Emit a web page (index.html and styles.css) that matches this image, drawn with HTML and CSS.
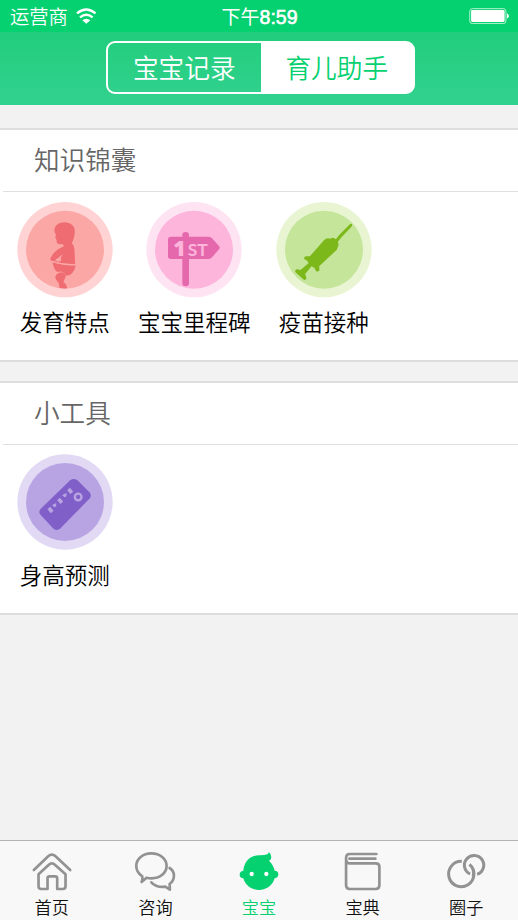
FILE: index.html
```html
<!DOCTYPE html>
<html lang="zh-CN">
<head>
<meta charset="utf-8">
<title>育儿助手</title>
<link rel="stylesheet" href="styles.css">
</head>
<body>
<div class="app">
  <div class="status">
    <div class="carrier"><span>运营商</span>
      <svg class="wifi" viewBox="228 24 62 48"><g fill="none" stroke="#fff" stroke-width="7"><path d="M231 40Q259 17 287 40"/><path d="M240 52Q259 36 278 52"/></g><path d="M247 61Q259 51 271 61L259 71Z" fill="#fff"/></svg>
    </div>
    <div class="time">下午<span class="digits">8:59</span></div>
    <div class="power"><svg class="battery" viewBox="633 26 120 50"><rect x="635" y="28" width="109" height="45" rx="8" fill="none" stroke="#b5f3d2" stroke-width="3"/><rect x="639" y="32" width="101" height="36" rx="4" fill="#fff"/><path d="M747 42q6 3 6 8t-6 8z" fill="#fff"/></svg></div>
  </div>
  <header class="header">
    <div class="segments"><div class="segment">宝宝记录</div><div class="segment active">育儿助手</div></div>
  </header>
  <main class="content">
    <section class="card">
      <h2 class="title">知识锦囊</h2>
      <div class="grid">
        <div class="item">
          <svg class="badge" viewBox="20.5 20 288 288"><circle cx="164.5" cy="163" r="143" fill="#ffd3d3"/><circle cx="164.5" cy="163" r="117" fill="#fba7a6"/>
            <g fill="#ef6d72"><path d="M133 108C130 93 145 81 163 81C181 81 194 92 194 108C194 122 190 134 185 143Q192 151 193 163L195 207Q158 207 127 197L120 194C121 184 132 170 145 161L163 151Q158 149 155 145Q146 149 141 144Q139 139 139 134L135 124L138 118Q133 114 133 108Z"/><path d="M127 201Q160 211 196 210Q196 222 187 232Q177 243 166 240C160 226 149 227 141 230Q130 222 127 201Z"/><path d="M145 233Q160 226 166 239Q168 247 163 252L160 261Q169 266 171 279Q159 280 148 278L146 264Q137 256 135 246Q137 236 145 233Z"/></g>
            <path d="M134 195L158 177L152 187L153 196L145 199Z" fill="#fba7a6"/><path d="M126 198Q158 209 196 208" fill="none" stroke="#fba7a6" stroke-width="4"/></svg>
          <span class="label">发育特点</span>
        </div>
        <div class="item">
          <svg class="badge" viewBox="19 20 288 288"><circle cx="163" cy="163" r="143" fill="#fee3f2"/><circle cx="163" cy="163" r="117" fill="#fdb5dc"/>
            <path d="M128 124V119Q128 110 138 110Q148 110 148 119V124H207Q213 124 217 129L238 152Q242 157 238 162L218 185Q213 191 207 191H148V263Q148 273 138 273Q128 273 128 263V191H93Q85 191 85 183V132Q85 124 93 124Z" fill="#e568ad"/>
            <text class="sign-one" x="101" y="181">1</text><text class="sign-st" x="144" y="181" textLength="60" lengthAdjust="spacingAndGlyphs">ST</text></svg>
          <span class="label">宝宝里程碑</span>
        </div>
        <div class="item">
          <svg class="badge" viewBox="17.5 20 288 288"><circle cx="161.5" cy="163" r="143" fill="#e9f5d2"/><circle cx="161.5" cy="163" r="117" fill="#c5e59a"/>
            <path d="M245 86Q248 89 243 95L214 126L203 139Q207 148 203 154L200 163L147 213L148 225Q142 232 137 226L133 218L124 213L105 236L109 249Q105 257 99 252L76 231Q73 223 80 222L91 224L115 204L111 196L102 191Q101 182 110 183H119L162 134Q169 127 180 130Q190 124 197 132L207 119L239 87Q243 84 245 86Z" fill="#7cb81a"/></svg>
          <span class="label">疫苗接种</span>
        </div>
      </div>
    </section>
    <section class="card tools">
      <h2 class="title">小工具</h2>
      <div class="grid">
        <div class="item">
          <svg class="badge" viewBox="20.5 21 288 288"><circle cx="164.5" cy="165" r="143" fill="#e2daf5"/><circle cx="164.5" cy="165" r="117" fill="#b9a4e3"/>
            <path d="M91 186L180 100Q190 92 201 99L238 136Q245 144 239 154L151 244Q141 253 130 245L91 203Q84 195 91 186Z" fill="#8060c8"/>
            <circle cx="204" cy="150" r="10" fill="none" stroke="#b9a4e3" stroke-width="7"/>
            <path d="M116 183L126 195M145 156L155 167M175 126L185 137" fill="none" stroke="#b9a4e3" stroke-width="11"/><path d="M126 174L138 168L138 178L132 181ZM156 144L169 138L169 148L163 151Z" fill="#b9a4e3"/></svg>
          <span class="label">身高预测</span>
        </div>
      </div>
    </section>
  </main>
  <nav class="tabs">
    <div class="tab"><svg class="tab-icon" viewBox="89.4 54 132 126"><path d="M101 114L144 73Q155 63 166 73L210 114M115 127L145 99Q155 89 165 99L196 127V163Q196 171 188 171H171V139Q171 133 165 133H148Q142 133 142 139V171H123Q115 171 115 163Z"/></svg><span>首页</span></div>
    <div class="tab"><svg class="tab-icon" viewBox="400.2 54 132 126"><path d="M428 133C415 124 410 113 410 102C410 80 430 64 455 64C481 64 501 80 501 102C501 123 481 139 456 139Q448 139 441 137L426 150Q430 139 428 133ZM510 108C520 114 523 122 523 131C523 143 518 150 510 156L511 173L497 164C478 167 461 160 455 151"/></svg><span>咨询</span></div>
    <div class="tab current"><svg class="tab-icon" viewBox="111 54 132 126"><path class="face" d="M130 116C133 87 151 69 180 70Q195 70 202 67Q206 65 206 60Q216 67 213 80Q211 85 207 86Q220 98 224 116Q235 116 235 127Q235 137 224 139C218 160 200 174 177 174C154 174 136 160 130 139Q119 138 119 128Q119 118 130 116Z"/><circle class="eye" cx="155" cy="126" r="6.5"/><circle class="eye" cx="199" cy="126" r="6.5"/></svg><span>宝宝</span></div>
    <div class="tab"><svg class="tab-icon" viewBox="421.8 54 132 126"><path d="M528 66H448Q437 66 437 78V160Q437 171 448 171H526Q537 171 537 160V105Q537 94 526 94H449Q437 94 437 80M525 80H447"/></svg><span>宝典</span></div>
    <div class="tab"><svg class="tab-icon" viewBox="132.6 54 132 126"><path class="ring" d="M186 88A38 38 0 1 0 209 97M211 126A29 29 0 1 1 232 127M209 97Q226 112 220 133"/></svg><span>圈子</span></div>
  </nav>
</div>
</body>
</html>
```
FILE: styles.css
```css
* { box-sizing: border-box; }
body { margin: 0; font-family: "Liberation Sans", "Noto Sans CJK SC", sans-serif; }
svg { display: block; }
.app { width: 518px; height: 920px; display: flex; flex-direction: column; background: #f2f2f2; overflow: hidden; }

.status { height: 32px; flex: none; display: grid; grid-template-columns: 1fr auto 1fr; align-items: center; padding: 0 9px 0 10px; background: #05d170; color: #fff; font: 350 19.3px/30px "Noto Sans CJK SC", sans-serif; }
.carrier { display: flex; align-items: center; gap: 8px; }
.wifi { width: 20.6px; height: 16px; }
.time { font-weight: 400; font-size: 19px; }
.digits { font: 400 19.5px/30px "Liberation Sans", sans-serif; -webkit-text-stroke: 0.6px #fff; }
.power { display: flex; justify-content: flex-end; }
.battery { width: 40px; height: 16.6px; }

.header { height: 73px; flex: none; display: flex; justify-content: center; padding-top: 9px; padding-left: 3px; background: linear-gradient(#21ce7c, #32d18f); }
.segments { width: 309px; height: 53px; display: flex; border: 2px solid #fff; border-radius: 9px; background: linear-gradient(90deg, transparent 153px, #fff 153px); }
.segment { flex: 1; text-align: center; color: #fff; font: 350 25.7px/48px "Noto Sans CJK SC", sans-serif; }
.active { color: #05d170; }

.content { flex: 1; display: flex; flex-direction: column; gap: 19px; padding-top: 23px; }
.card { height: 234px; flex: none; background: #fff; border-top: 2px solid #dedede; border-bottom: 2px solid #dcdcdc; }
.title { height: 62px; margin: 0 0 0 3px; padding-left: 31px; border-bottom: 1px solid #e0e0e0; color: #666; font: 350 25.6px/57px "Noto Sans CJK SC", sans-serif; }
.grid { display: grid; grid-template-columns: repeat(4, 1fr); padding-top: 10px; }
.item { display: flex; flex-direction: column; align-items: center; }
.badge { width: 96px; height: 96px; }
.label { margin-top: 6px; color: #000; font: 350 22.5px/34px "Noto Sans CJK SC", sans-serif; white-space: nowrap; }
.tools .grid { padding-top: 9px; }
.tools .label { margin-top: 7px; }
.sign-one { font: 800 64px "Open Sans", sans-serif; fill: #fdb5dc; }
.sign-st { font: 700 52px Lato, sans-serif; fill: #fdb5dc; }

.tabs { height: 80px; flex: none; display: flex; border-top: 1px solid #b4b4b4; background: #f8f8f8; padding-top: 9px; }
.tab { flex: 1; display: flex; flex-direction: column; align-items: center; gap: 2px; color: #111; font: 350 17.2px/26px "Noto Sans CJK SC", sans-serif; }
.tab-icon { width: 44px; height: 42px; flex: none; fill: none; stroke: #929292; stroke-width: 8; stroke-linecap: round; stroke-linejoin: round; }
.current { color: #05d170; }
.face { fill: #05d170; stroke: none; }
.eye { fill: #fff; stroke: none; }
.ring { stroke-width: 9; stroke-linecap: butt; }
```
